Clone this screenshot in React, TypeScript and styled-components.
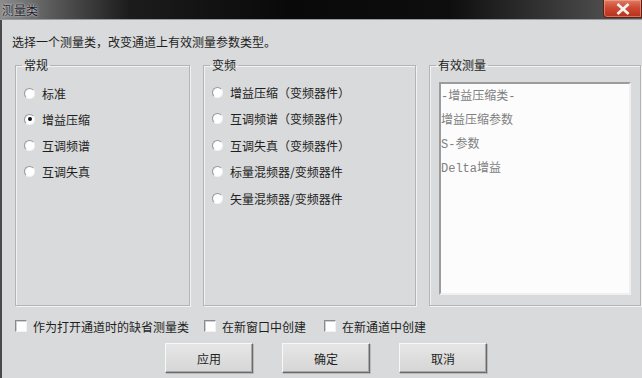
import styled, { createGlobalStyle } from "styled-components";

const Global = createGlobalStyle`
    html, body {
        margin: 0;
        padding: 0;
        width: 642px;
        height: 378px;
        overflow: hidden;
        background: #d9dadb;
    }
    * {
        box-sizing: border-box;
    }
`;

const Window = styled.div`
    width: 642px;
    height: 378px;
    display: flex;
    flex-direction: column;
    background: #d9dadb;
    font-family: "Noto Sans CJK SC", "Noto Sans", sans-serif;
    font-size: 12px;
    color: #1e1e1e;
    border-left: 2px solid #4a4a4a;
`;

const TitleBar = styled.div`
    height: 20px;
    flex: none;
    margin-left: -2px;
    display: flex;
    align-items: center;
    justify-content: space-between;
    background: linear-gradient(
        to right,
        #8c8c8c 0%,
        #5a5a5a 8%,
        #1c1c1c 20%,
        #090909 45%,
        #0e0e0e 70%,
        #3c3c3c 88%,
        #5c5c5c 100%
    );
    border-bottom: 1px solid #9a9a9a;
`;

const Title = styled.span`
    padding-left: 2px;
    font-size: 12px;
    line-height: 14px;
    color: #1a1a2a;
    text-shadow: 0 0 3px rgba(255, 255, 255, 0.7), 0 0 1px rgba(255, 255, 255, 0.6);
`;

const CloseButton = styled.div`
    width: 39px;
    height: 18px;
    align-self: flex-start;
    display: flex;
    align-items: center;
    justify-content: center;
    background: linear-gradient(to bottom, #e07a66 0%, #cc4a33 45%, #b8301c 100%);
    border: 1px solid #5a2018;
    border-top: none;
    border-radius: 0 0 0 4px;
    box-shadow: inset 0 0 0 1px rgba(255, 190, 170, 0.45);
`;

const Content = styled.div`
    flex: 1;
    display: flex;
    flex-direction: column;
    padding: 0 3px 0 11px;
`;

const Hint = styled.div`
    margin-top: 14px;
    margin-left: -1px;
    height: 16px;
    line-height: 16px;
`;

const Groups = styled.div`
    margin-top: 8px;
    display: grid;
    grid-template-columns: 175px 213px 212px;
    column-gap: 13px;
    height: 248px;
    padding-left: 2px;
`;

const Group = styled.fieldset<{ $pad?: string }>`
    margin: 0;
    min-width: 0;
    padding: ${p => p.$pad ?? "8px 8px 0 8px"};
    border: 1px solid #b4b4b4;
    box-shadow: inset 1px 1px 0 #f2f2f2, 1px 1px 0 #f2f2f2;
    display: flex;
    flex-direction: column;
`;

const Legend = styled.legend`
    margin-left: -2px;
    padding: 0 2px;
    font-size: 12px;
    line-height: 14px;
    color: #1e1e1e;
`;

const RadioRow = styled.label<{ $h: number }>`
    height: ${p => p.$h}px;
    display: flex;
    align-items: center;
    gap: 7px;
    white-space: nowrap;
`;

const RadioDot = styled.span<{ $on?: boolean }>`
    width: 11px;
    height: 11px;
    flex: none;
    border-radius: 50%;
    background: radial-gradient(circle at 60% 60%, #ffffff 55%, #e4e4e4 100%);
    border: 1px solid;
    border-color: #9a9a9a #f4f4f4 #f4f4f4 #9a9a9a;
    display: flex;
    align-items: center;
    justify-content: center;
    &::after {
        content: "";
        width: 4px;
        height: 4px;
        border-radius: 50%;
        background: ${p => (p.$on ? "#111" : "transparent")};
    }
`;

const ListBox = styled.div`
    margin: 10px 1px 10px 1px;
    flex: 1;
    background: #fcfcfc;
    border: 2px solid;
    border-color: #9c9c9c #f0f0f0 #f0f0f0 #9c9c9c;
    padding: 1px 0 0 0;
    display: flex;
    flex-direction: column;
`;

const ListItem = styled.div`
    height: 24px;
    line-height: 24px;
    font-family: "Liberation Mono", "Noto Sans CJK SC", monospace;
    font-size: 12px;
    color: #808080;
    white-space: nowrap;
`;

const Options = styled.div`
    margin-top: 13px;
    height: 14px;
    display: flex;
    align-items: center;
    padding-left: 2px;
`;

const CheckRow = styled.label<{ $w: number }>`
    width: ${p => p.$w}px;
    display: flex;
    align-items: center;
    gap: 6px;
    white-space: nowrap;
`;

const CheckBox = styled.span`
    width: 12px;
    height: 12px;
    flex: none;
    background: #ffffff;
    border: 1px solid;
    border-color: #8a8a8a #f2f2f2 #f2f2f2 #8a8a8a;
    box-shadow: inset 1px 1px 0 #cfcfcf;
`;

const Buttons = styled.div`
    margin-top: 10px;
    display: flex;
    gap: 29px;
    padding-left: 152px;
`;

const Button = styled.button`
    width: 88px;
    height: 30px;
    font-family: "Noto Sans CJK SC", "Noto Sans", sans-serif;
    font-size: 12px;
    color: #1e1e1e;
    background: linear-gradient(to bottom, #e6e6e6, #d6d6d6);
    border: 1px solid;
    border-color: #f8f8f8 #6a6a6a #6a6a6a #f8f8f8;
    box-shadow: inset -1px -1px 0 #a8a8a8, 1px 1px 0 #b8b8b8;
    padding: 0;
`;

const general = ["标准", "增益压缩", "互调频谱", "互调失真"];
const converter = [
    "增益压缩（变频器件）",
    "互调频谱（变频器件）",
    "互调失真（变频器件）",
    "标量混频器/变频器件",
    "矢量混频器/变频器件",
];
const measurements = ["-增益压缩类-", "增益压缩参数", "S-参数", "Delta增益"];

function App() {
    return (
        <Window>
            <Global />
            <TitleBar>
                <Title>测量类</Title>
                <CloseButton>
                    <svg width="14" height="12" viewBox="0 0 14 12">
                        <path d="M2.5 2 L11.5 10 M11.5 2 L2.5 10" stroke="#f6f0ee" strokeWidth="2.8" strokeLinecap="square" />
                    </svg>
                </CloseButton>
            </TitleBar>
            <Content>
                <Hint>选择一个测量类，改变通道上有效测量参数类型。</Hint>
                <Groups>
                    <Group>
                        <Legend>常规</Legend>
                        {general.map((t, i) => (
                            <RadioRow key={t} $h={26}>
                                <RadioDot $on={i === 1} />
                                {t}
                            </RadioRow>
                        ))}
                    </Group>
                    <Group $pad="7px 8px 0 8px">
                        <Legend>变频</Legend>
                        {converter.map(t => (
                            <RadioRow key={t} $h={26.5}>
                                <RadioDot />
                                {t}
                            </RadioRow>
                        ))}
                    </Group>
                    <Group $pad="0 8px 0 8px">
                        <Legend>有效测量</Legend>
                        <ListBox>
                            {measurements.map(t => (
                                <ListItem key={t}>{t}</ListItem>
                            ))}
                        </ListBox>
                    </Group>
                </Groups>
                <Options>
                    <CheckRow $w={189}>
                        <CheckBox />
                        作为打开通道时的缺省测量类
                    </CheckRow>
                    <CheckRow $w={120}>
                        <CheckBox />
                        在新窗口中创建
                    </CheckRow>
                    <CheckRow $w={120}>
                        <CheckBox />
                        在新通道中创建
                    </CheckRow>
                </Options>
                <Buttons>
                    <Button>应用</Button>
                    <Button>确定</Button>
                    <Button>取消</Button>
                </Buttons>
            </Content>
        </Window>
    );
}

export default App;
